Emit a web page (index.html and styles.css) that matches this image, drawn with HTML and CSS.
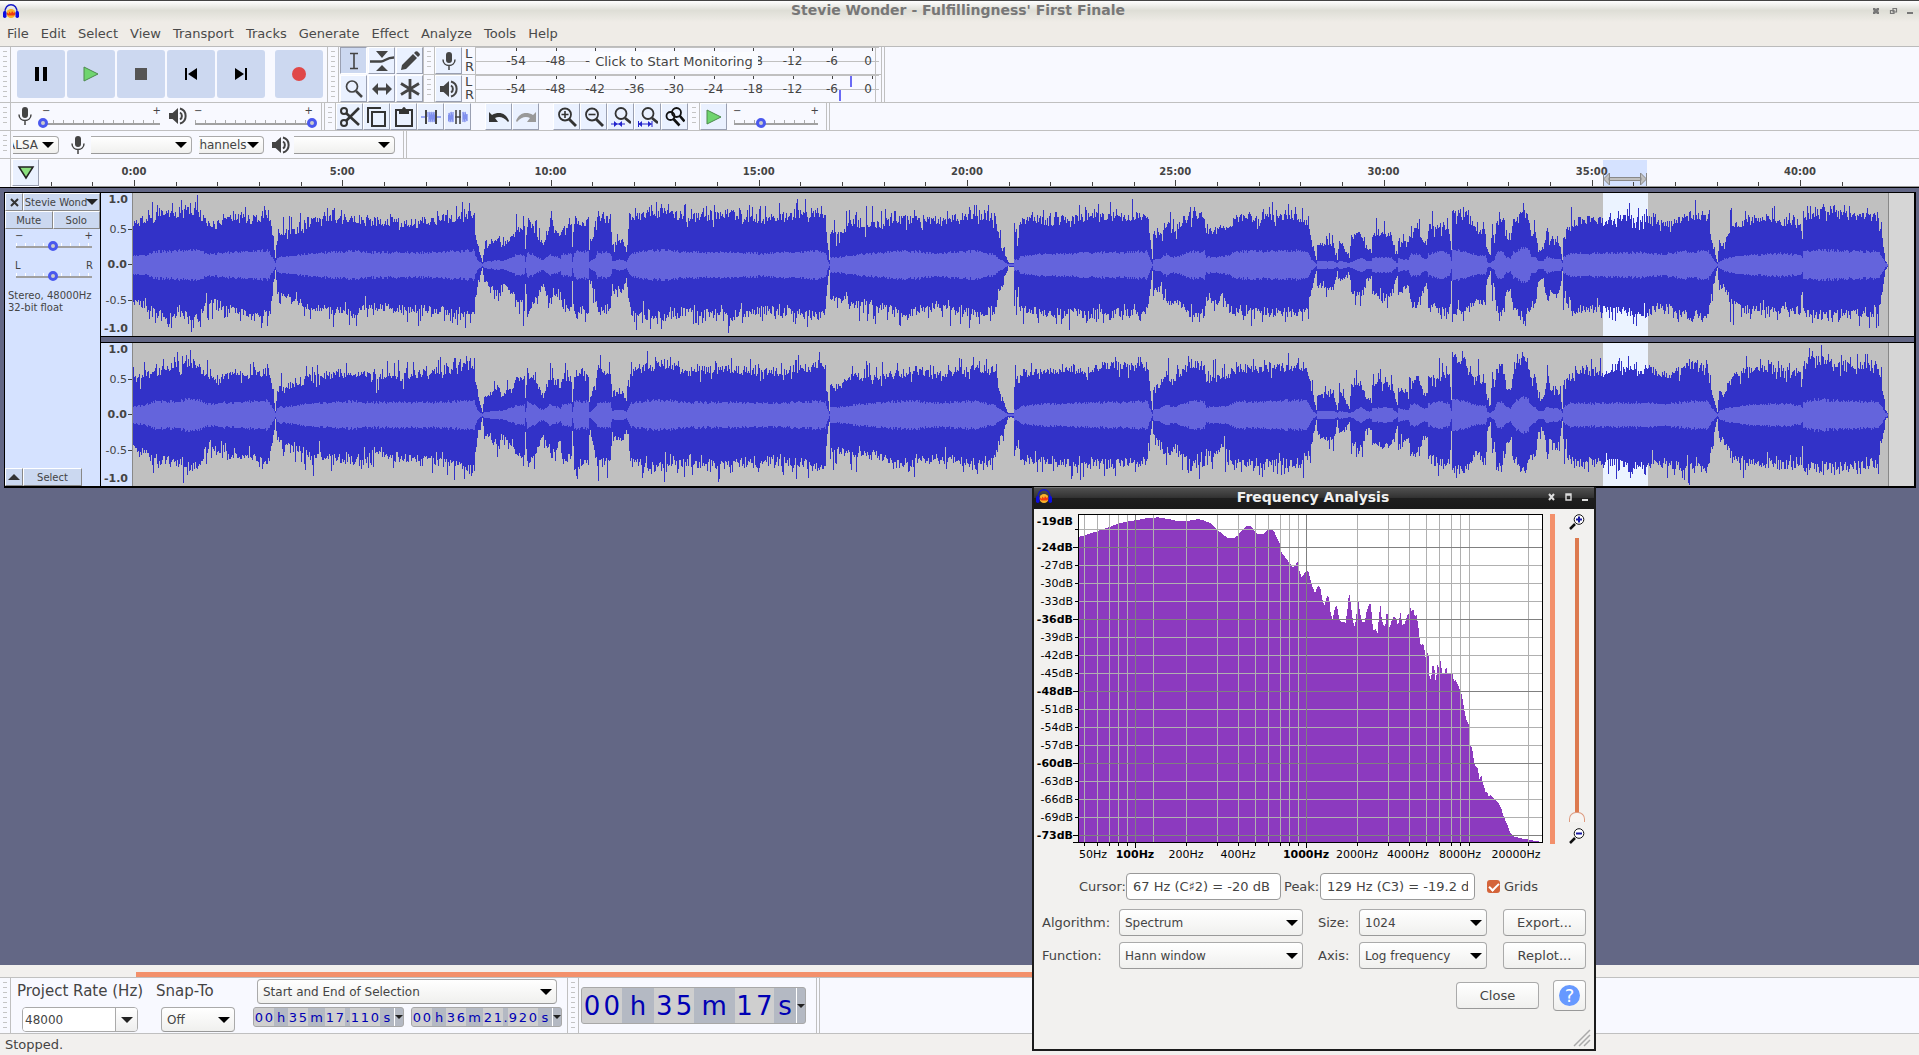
FILE: index.html
```html
<!DOCTYPE html>
<html lang="en">
<head>
    <meta charset="UTF-8">
    <meta name="viewport" content="width=device-width, initial-scale=1.0">
    <title>Stevie Wonder - Fulfillingness' First Finale</title>
    <link rel="stylesheet" href="styles.css">
</head>
<body>

    <svg class="sprite" aria-hidden="true">
        <symbol id="i-logo" viewBox="0 0 16 16">
            <path d="M2 9C1 -2 15 -2 14 9" fill="none" stroke="#1418c8" stroke-width="1.4"/>
            <circle cx="8" cy="9.500" r="4.500" fill="#f9b32a"/>
            <path d="M3.500 10l1-1.500 1 1.500 1-2.500 1.500 2 1-2.500 1.500 2 1-1 1 2-1.500 1.500h-5.500z" fill="#f03a10"/>
            <rect x="0" y="7" width="3.500" height="7" rx="1.700" fill="#0c0ce0"/>
            <rect x="12.500" y="7" width="3.500" height="7" rx="1.700" fill="#0c0ce0"/>
        </symbol>
        <symbol id="i-mic" viewBox="0 0 20 20">
            <rect x="7" y="1" width="6" height="11" rx="3" fill="#444"/>
            <path d="M4 8.500c0 8 12 8 12 0M10 14.500v4.500" fill="none" stroke="#444" stroke-width="1.500"/>
        </symbol>
        <symbol id="i-speaker" viewBox="0 0 20 20">
            <path d="M1 7h3.500L10 2v16l-5.500-5H1z" fill="#444"/>
            <path d="M12 6.500c2.500 1.500 2.500 5.500 0 7M12 2.500c7.500 2 7.500 13 0 15" fill="none" stroke="#444" stroke-width="2"/>
        </symbol>
        <symbol id="i-play" viewBox="0 0 16 16">
            <path d="M1 1l14 7-14 7z" fill="#6fd56f" stroke="#4d8a4d"/>
        </symbol>
    </svg>

    <header class="titlebar">
        <svg class="logo"><use href="#i-logo"/></svg>
        <h1>Stevie Wonder - Fulfillingness' First Finale</h1>
        <div class="window-buttons">
            <svg viewBox="0 0 40 8"><path d="M0 0h2l1 1 1-1h2v2l-1 1 1 1v2H4L3 5 2 6H0V4l1-1-1-1z" fill="#777"/><path d="M20 .500h3.500v3.500h-3.500zM17.500 2.500h3.500v3h-3.500z" fill="none" stroke="#777" stroke-width="1.200"/><path d="M34 4h6v2h-6z" fill="#777"/></svg>
        </div>
    </header>

    <nav class="menu">
        <a href="#">File</a>
        <a href="#">Edit</a>
        <a href="#">Select</a>
        <a href="#">View</a>
        <a href="#">Transport</a>
        <a href="#">Tracks</a>
        <a href="#">Generate</a>
        <a href="#">Effect</a>
        <a href="#">Analyze</a>
        <a href="#">Tools</a>
        <a href="#">Help</a>
    </nav>

    <div class="toolbar toolbar-main">
        <span class="grip"></span>
        <div class="transport">
            <button aria-label="Pause"><svg viewBox="0 0 16 16"><path d="M2 1h4v14H2zM10 1h4v14h-4z"/></svg></button>
            <button aria-label="Play"><svg><use href="#i-play"/></svg></button>
            <button aria-label="Stop"><svg viewBox="0 0 16 16"><path d="M2 2h12v12H2z" fill="#555"/></svg></button>
            <button aria-label="Skip to start"><svg viewBox="0 0 16 16"><path d="M2 2h2v12H2zM14 2v12L5 8z"/></svg></button>
            <button aria-label="Skip to end"><svg viewBox="0 0 16 16"><path d="M12 2h2v12h-2zM2 2v12l9-6z"/></svg></button>
            <button class="record" aria-label="Record"><svg viewBox="0 0 16 16"><circle cx="8" cy="8" r="7" fill="#e04848"/></svg></button>
        </div>
        <span class="grip"></span>
        <div class="tools">
            <button class="cell active" aria-label="Selection tool"><svg viewBox="0 0 20 20"><path d="M6 2.500h8M6 17.500h8M10 2.500v15" fill="none" stroke="#444" stroke-width="1.600"/></svg></button>
            <button class="cell" aria-label="Envelope tool"><svg class="envelope" viewBox="0 0 24 20"><path d="M6 0h12l-6 7zM6 20h12l-6-6z" fill="#444"/><path d="M0 10.500h11c4 0 5-4 13-4" fill="none" stroke="#444" stroke-width="2.400"/></svg></button>
            <button class="cell" aria-label="Draw tool"><svg viewBox="0 0 20 20"><path d="M1 19l1-5L13 3l4 4L6 18zM14 2l1.500-1.500q1-.5 2 0l2 2q.8 1 0 2L18 6z" fill="#444"/></svg></button>
            <button class="cell" aria-label="Zoom tool"><svg viewBox="0 0 20 20"><circle cx="8" cy="7.500" r="5.500" fill="none" stroke="#444" stroke-width="1.700"/><path d="M12 12l6 6" stroke="#444" stroke-width="2.500"/></svg></button>
            <button class="cell" aria-label="Time shift tool"><svg viewBox="0 0 20 20"><path d="M0 10l6-6v4.500h8V4l6 6-6 6v-4.500H6V16z" fill="#444"/></svg></button>
            <button class="cell" aria-label="Multi tool"><svg viewBox="0 0 20 20"><path d="M10 0v20M1 4.500l18 11M19 4.500l-18 11" stroke="#444" stroke-width="2.800"/></svg></button>
        </div>
        <div class="meters">
            <div class="meter-row">
                <span class="grip"></span>
                <button class="cell" aria-label="Recording meter"><svg><use href="#i-mic"/></svg></button>
                <div class="lr"><span>L</span><span>R</span></div>
                <div class="meter">
                    <svg class="meter-scale" viewBox="0 0 404 27"></svg>
                    <button class="monitor">Click to Start Monitoring</button>
                </div>
            </div>
            <div class="meter-row">
                <span class="grip"></span>
                <button class="cell" aria-label="Playback meter"><svg><use href="#i-speaker"/></svg></button>
                <div class="lr"><span>L</span><span>R</span></div>
                <div class="meter">
                    <svg class="meter-scale peaks" viewBox="0 0 404 27"></svg>
                </div>
            </div>
        </div>
        <span class="bar-end"></span>
    </div>

    <div class="toolbar">
        <span class="grip"></span>
        <div class="mixer">
            <svg class="icon"><use href="#i-mic"/></svg>
            <div class="slider mixer-slider">
                <div class="signs"><span>−</span><span>+</span></div>
                <input type="range" min="0" max="100" value="0" aria-label="Recording volume">
            </div>
            <svg class="icon"><use href="#i-speaker"/></svg>
            <div class="slider mixer-slider">
                <div class="signs"><span>−</span><span>+</span></div>
                <input type="range" min="0" max="100" value="100" aria-label="Playback volume">
            </div>
        </div>
        <span class="bar-end"></span>
        <span class="grip"></span>
        <div class="cells">
            <button class="cell" aria-label="Cut"><svg viewBox="0 0 20 20"><circle cx="4" cy="4" r="3" fill="none" stroke="#333" stroke-width="2"/><circle cx="4" cy="16" r="3" fill="none" stroke="#333" stroke-width="2"/><path d="M6 6l13 12M6 14L19 1" stroke="#333" stroke-width="2.600"/></svg></button>
            <button class="cell" aria-label="Copy"><svg viewBox="0 0 20 20"><path d="M1 16V1h13M5 5h13v14H5z" fill="none" stroke="#333" stroke-width="2"/></svg></button>
            <button class="cell" aria-label="Paste"><svg viewBox="0 0 20 20"><path d="M2 3h16v16H2z" fill="none" stroke="#333" stroke-width="2"/><path d="M5 2h3q2-4 4 0h3v5H5z" fill="#333"/></svg></button>
            <button class="cell" aria-label="Trim"><svg viewBox="0 0 20 20"><path d="M0 10h4M16 10h4M6 10V5M8 15V5l2 10V5l2 10V5l2 10V5" fill="none" stroke="#8090ee" stroke-width="1.300"/><path d="M5 3v14M15 3v14" stroke="#444" stroke-width="2"/></svg></button>
            <button class="cell" aria-label="Silence"><svg viewBox="0 0 20 20"><path d="M0 8v5l1 1V6l2 9V5l2 10V5M15 15V5l2 10V5l2 9V7" fill="none" stroke="#8090ee" stroke-width="1.300"/><path d="M8 3v14M12 3v14M7 10h6" stroke="#444" stroke-width="1.600"/></svg></button>
        </div>
        <div class="cells gap">
            <button class="cell" aria-label="Undo"><svg viewBox="0 0 20 20"><path d="M0 5v10h9L6 11c4-2 9-1 13 4l1-1C17 6 10 4 3 8z" fill="#333"/></svg></button>
            <button class="cell" aria-label="Redo"><svg viewBox="0 0 20 20"><path d="M20 5v10h-9l3-4c-4-2-9-1-13 4l-1-1C3 6 10 4 17 8z" fill="#999"/></svg></button>
        </div>
        <div class="cells gap">
            <button class="cell" aria-label="Zoom in"><svg viewBox="0 0 20 20"><circle cx="8" cy="7.500" r="6" fill="none" stroke="#333" stroke-width="1.800"/><path d="M12 12l7 7" stroke="#333" stroke-width="2.800"/><path d="M4.500 7.500h7M8 4v7" stroke="#333" stroke-width="1.600"/></svg></button>
            <button class="cell" aria-label="Zoom out"><svg viewBox="0 0 20 20"><circle cx="8" cy="7.500" r="6" fill="none" stroke="#333" stroke-width="1.800"/><path d="M12 12l7 7" stroke="#333" stroke-width="2.800"/><path d="M4.500 7.500h7" stroke="#333" stroke-width="1.600"/></svg></button>
            <button class="cell" aria-label="Fit selection"><svg viewBox="0 0 20 20"><circle cx="10" cy="6.500" r="5.500" fill="none" stroke="#333" stroke-width="1.800"/><path d="M14 11l6 5" stroke="#333" stroke-width="2.800"/><path d="M0 17h14" stroke="#22c"/><path d="M3 14l3.500 3L3 20zM11 14l-3.500 3 3.500 3z" fill="#22c"/></svg></button>
            <button class="cell" aria-label="Fit project"><svg viewBox="0 0 20 20"><circle cx="10" cy="6.500" r="5.500" fill="none" stroke="#333" stroke-width="1.800"/><path d="M14 11l6 5" stroke="#333" stroke-width="2.800"/><path d="M0 17h14M.500 14v6M14 14v6" stroke="#22c"/><path d="M4 14l-3.500 3L4 20zM10 14l3.500 3-3.500 3z" fill="#22c"/></svg></button>
            <button class="cell" aria-label="Zoom toggle"><svg viewBox="0 0 20 20"><circle cx="5.500" cy="9" r="4" fill="none" stroke="#111" stroke-width="1.800"/><circle cx="11.500" cy="5.500" r="4.500" fill="none" stroke="#111" stroke-width="1.800"/><path d="M8.500 12l6 6.500M14.500 8.500l5 6" stroke="#111" stroke-width="2.600"/></svg></button>
        </div>
        <span class="grip"></span>
        <div class="cells">
            <button class="cell" aria-label="Play at speed"><svg><use href="#i-play"/></svg></button>
            <div class="slider speed-slider">
                <div class="signs"><span>−</span><span>+</span></div>
                <input type="range" min="0" max="100" value="32" aria-label="Playback speed">
            </div>
        </div>
        <span class="bar-end"></span>
    </div>

    <div class="toolbar">
        <span class="grip"></span>
        <div class="device">
            <span class="select clipped host"><select aria-label="Audio host"><option>ALSA</option></select></span>
            <svg class="icon"><use href="#i-mic"/></svg>
            <span class="select clipped wide"><select aria-label="Recording device"><option></option></select></span>
            <span class="select clipped channels"><select aria-label="Recording channels"><option>Channels</option></select></span>
            <svg class="icon"><use href="#i-speaker"/></svg>
            <span class="select clipped wide"><select aria-label="Playback device"><option></option></select></span>
        </div>
        <span class="bar-end"></span>
    </div>

    <div class="timeline">
        <span class="timeline-left"></span>
        <button class="cell" aria-label="Pin play head"><svg viewBox="0 0 20 20"><path d="M3 4h14L10 15z" fill="#8be07e" stroke="#222" stroke-width="1.500"/></svg></button>
        <svg class="timeline-scale" height="27"></svg>
    </div>

    <main>
        <section class="track">
            <div class="panel">
                <div class="panel-row">
                    <button class="panel-close" aria-label="Close track"><svg viewBox="0 0 9 9"><path d="M1 1l7 7M8 1L1 8" stroke="#333" stroke-width="2"/></svg></button>
                    <button class="panel-name">Stevie Wond<span class="down"></span></button>
                </div>
                <div class="panel-row">
                    <button>Mute</button>
                    <button>Solo</button>
                </div>
                <div class="slider">
                    <div class="signs"><span>−</span><span>+</span></div>
                    <input type="range" min="0" max="100" value="49" aria-label="Gain">
                </div>
                <div class="slider pan">
                    <div class="signs"><span>L</span><span>R</span></div>
                    <input type="range" min="0" max="100" value="49" aria-label="Pan">
                </div>
                <p>Stereo, 48000Hz<br>32-bit float</p>
                <div class="panel-row panel-bottom">
                    <button class="panel-close" aria-label="Collapse"><svg class="up" viewBox="0 0 12 6"><path d="M0 6l6-6 6 6z" fill="#333"/></svg></button>
                    <button class="panel-select">Select</button>
                </div>
            </div>
            <div class="channels-view">
                <div class="channel">
                    <ul class="scale"><li>1.0</li><li>0.5</li><li>0.0</li><li>-0.5</li><li>-1.0</li></ul>
                    <svg class="wave" viewBox="0 0 1781 143" preserveAspectRatio="none"></svg>
                </div>
                <div class="channel">
                    <ul class="scale"><li>1.0</li><li>0.5</li><li>0.0</li><li>-0.5</li><li>-1.0</li></ul>
                    <svg class="wave" viewBox="0 0 1781 143" preserveAspectRatio="none"></svg>
                </div>
            </div>
        </section>
    </main>

    <div class="scrollbar"><span></span></div>

    <div class="toolbar toolbar-selection">
        <span class="grip"></span>
        <div class="field rate">
            <label for="rate">Project Rate (Hz)</label>
            <span class="combo"><input id="rate" type="text" value="48000"><button aria-label="Rates"><span class="down"></span></button></span>
        </div>
        <div class="field snap">
            <label for="snap">Snap-To</label>
            <span class="select"><select id="snap"><option>Off</option></select></span>
        </div>
        <div class="field range">
            <span class="select"><select aria-label="Selection mode"><option>Start and End of Selection</option></select></span>
            <div class="times">
                <div class="time"><b>0</b><b>0</b><i>h</i><b>3</b><b>5</b><i class="m">m</i><b>1</b><b>7</b><i class="dot">.</i><b>1</b><b>1</b><b>0</b><i>s</i><button aria-label="Format"><span class="down"></span></button></div>
                <div class="time"><b>0</b><b>0</b><i>h</i><b>3</b><b>6</b><i class="m">m</i><b>2</b><b>1</b><i class="dot">.</i><b>9</b><b>2</b><b>0</b><i>s</i><button aria-label="Format"><span class="down"></span></button></div>
            </div>
        </div>
        <span class="grip"></span>
        <div class="time big"><b>0</b><b>0</b><i>h</i><b>3</b><b>5</b><i class="m">m</i><b>1</b><b>7</b><i class="s">s</i><button aria-label="Format"><span class="down"></span></button></div>
        <span class="bar-end"></span>
    </div>

    <footer>Stopped.</footer>

    <div class="dialog" role="dialog" aria-labelledby="dialog-title">
        <div class="dialog-title">
            <svg class="logo"><use href="#i-logo"/></svg>
            <h2 id="dialog-title">Frequency Analysis</h2>
            <svg class="dialog-buttons" viewBox="0 0 42 8"><path d="M1 1l5 6M6 1L1 7" stroke="#ddd" stroke-width="2"/><path d="M18 1h5v6h-5zM18 2h5" fill="none" stroke="#ddd" stroke-width="1.400"/><path d="M34 6h6v2h-6z" fill="#ddd"/></svg>
        </div>
        <div class="plot-row">
            <svg class="plot" viewBox="0 0 512 350"></svg>
            <span class="plot-scroll"></span>
            <div class="plot-zoom">
                <svg viewBox="0 0 16 16"><path d="M1 15l5-5" stroke="#111" stroke-width="2.500"/><circle cx="10" cy="5.500" r="4.800" fill="#fff" stroke="#111"/><path d="M7 5.500h6M10 2.500v6" stroke="#1818a0" stroke-width="2"/></svg>
                <input type="range" min="0" max="100" value="0" aria-label="Vertical zoom">
                <svg viewBox="0 0 16 16"><path d="M1 15l5-5" stroke="#111" stroke-width="2.500"/><circle cx="10" cy="5.500" r="4.800" fill="#fff" stroke="#111"/><path d="M7 5.500h6" stroke="#1818a0" stroke-width="2"/></svg>
            </div>
        </div>
        <div class="readout">
            <label for="cursor">Cursor:</label><input id="cursor" type="text" value="67 Hz (C♯2) = -20 dB" readonly>
            <label for="peak">Peak:</label><input id="peak" type="text" value="129 Hz (C3) = -19.2 dB" readonly>
            <label class="grids"><input type="checkbox" checked>Grids</label>
        </div>
        <div class="options">
            <label for="algorithm">Algorithm:</label>
            <span class="select"><select id="algorithm"><option>Spectrum</option></select></span>
            <label for="size">Size:</label>
            <span class="select"><select id="size"><option>1024</option></select></span>
            <button>Export...</button>
            <label for="function">Function:</label>
            <span class="select"><select id="function"><option>Hann window</option></select></span>
            <label for="axis">Axis:</label>
            <span class="select"><select id="axis"><option>Log frequency</option></select></span>
            <button>Replot...</button>
        </div>
        <div class="dialog-footer">
            <button class="close">Close</button>
            <button class="help" aria-label="Help"><span>?</span></button>
        </div>
        <svg class="resize" viewBox="0 0 18 18"><path d="M1 17L17 1M6 17L17 6M11 17l6-6" stroke="#aaa" stroke-width="1.500"/></svg>
    </div>

    <script src="app.js"></script>
</body>
</html>
```
FILE: styles.css
```css
* {
    box-sizing: border-box;
}
body {
    margin: 0;
    min-height: 100vh;
    display: flex;
    flex-direction: column;
    position: relative;
    font-family: "DejaVu Sans", sans-serif;
    font-size: 13px;
    color: #444;
    background-color: #636785;
    overflow: hidden;
}
button, input, select {
    font-family: inherit;
    font-size: 13px;
    color: #444;
    margin: 0;
    padding: 0;
}
svg {
    display: block;
}
.sprite {
    display: none;
}
.logo {
    width: 16px;
    height: 16px;
}

/* title and menu */
.titlebar {
    height: 22px;
    padding: 0 6px 0 3px;
    display: flex;
    align-items: center;
    justify-content: space-between;
    border-top: 1px solid #444;
    background: linear-gradient(#fff, #deded6 45%, #efece7);
}
.titlebar h1 {
    margin: 0 0 3px;
    font-size: 14px;
    line-height: 18px;
    color: #777;
}
.window-buttons svg {
    width: 40px;
    height: 8px;
}
.titlebar .logo {
    margin-right: 24px;
}
.menu {
    height: 25px;
    padding: 0 0 1px 7px;
    display: flex;
    gap: 12px;
    align-items: center;
    background-color: #efece7;
    border-bottom: 1px solid #bbb;
}
.menu a {
    color: #4a4a4a;
    text-decoration: none;
}

/* toolbars */
.toolbar {
    height: 28px;
    display: flex;
    background-color: #f8f9ff;
    border-bottom: 1px solid #c0c0c0;
}
.toolbar-main {
    height: 56px;
}
.grip {
    width: 11px;
    flex: none;
    border-right: 1px solid #c0c0c0;
    padding: 4px 3px;
    background: repeating-linear-gradient(#c4c4c4 0 1px, #f8f9ff 1px 5px) content-box;
}
.bar-end {
    width: 4px;
    flex: none;
    border-left: 1px solid #c0c0c0;
    border-right: 1px solid #c0c0c0;
}
.cell {
    width: 27px;
    height: 27px;
    flex: none;
    display: flex;
    align-items: center;
    justify-content: center;
    background-color: #eaf1ff;
    border: 1px solid #fff;
    border-right-color: #9aa0b2;
    border-bottom-color: #9aa0b2;
}
.cell svg {
    width: 20px;
    height: 20px;
}
.cell .envelope {
    width: 24px;
}
.cell svg:has(use[href="#i-play"]) {
    width: 16px;
    height: 16px;
}
.cell.active {
    background-color: #ccd8f0;
    border-color: #9aa0b2 #fff #fff #9aa0b2;
}
.transport {
    display: flex;
    gap: 2px;
    padding: 3px 4px 0 6px;
    border-right: 1px solid #c0c0c0;
}
.transport button {
    width: 48px;
    height: 48px;
    display: flex;
    align-items: center;
    justify-content: center;
    border: none;
    border-radius: 3px;
    background-color: #ccd8f0;
}
.transport svg {
    width: 16px;
    height: 16px;
}
.transport .record {
    margin-left: 8px;
}
.tools {
    display: grid;
    grid-template-columns: repeat(3, 27px);
    gap: 1px;
    padding-left: 1px;
    align-content: start;
    border-right: 1px solid #c0c0c0;
}
.meters {
    display: flex;
    flex-direction: column;
    gap: 1px;
    background-color: #c0c0c0;
}
.meter-row {
    display: flex;
    height: 27px;
    background-color: #f8f9ff;
}
.lr {
    width: 13px;
    padding-left: 3px;
    display: flex;
    flex-direction: column;
    line-height: 13px;
}
.meter {
    position: relative;
    width: 406px;
}
.meter-scale {
    width: 404px;
    height: 27px;
    font-size: 12px;
}
.monitor {
    position: absolute;
    left: 115px;
    top: 5px;
    width: 168px;
    height: 19px;
    border: none;
    background-color: #fbfcff;
    white-space: nowrap;
}
.mixer {
    display: flex;
    padding-right: 4px;
}
.icon {
    width: 20px;
    height: 20px;
    flex: none;
    margin: 3px 3px 0 4px;
}
.slider + .icon {
    margin: 3px 2px 0 3px;
}
.cells {
    display: flex;
}
.cells.gap {
    margin-left: 14px;
}
.cells + .grip {
    margin-left: 1px;
}

/* sliders */
.slider {
    font-size: 10px;
    line-height: 10px;
}
.signs {
    display: flex;
    justify-content: space-between;
    padding: 0 4px;
}
.slider input {
    display: block;
    width: 100%;
    height: 10px;
    appearance: none;
    background:
        linear-gradient(#a0a0a0, #a0a0a0) 5px 5px / calc(100% - 10px) 2px no-repeat,
        repeating-linear-gradient(90deg, #aaa 0 1px, transparent 1px 10px) 5px 2px / calc(100% - 10px) 3px no-repeat;
}
.slider input::-webkit-slider-thumb {
    appearance: none;
    width: 10px;
    height: 10px;
    border: 3px solid #4a58ee;
    border-radius: 50%;
    background-color: #ccc;
}
.mixer-slider {
    width: 127px;
    padding-top: 3px;
}
.mixer-slider input,
.speed-slider input {
    margin-top: 2px;
}
.speed-slider {
    width: 94px;
    margin: 0 3px 0 2px;
    padding-top: 3px;
}

/* drop-downs */
.select {
    position: relative;
    display: block;
    overflow: hidden;
}
.select select {
    appearance: none;
    width: 100%;
    height: 100%;
    padding-left: 5px;
    font-size: 12px;
    border: 1px solid #aaa;
    border-bottom-color: #999;
    border-radius: 4px;
    background: linear-gradient(#fff, #f0f0ee);
}
.select::after {
    content: "";
    position: absolute;
    right: 5px;
    top: calc(50% - 3px);
    border: 6px solid transparent;
    border-top-color: #000;
    border-bottom: none;
    pointer-events: none;
}
.device {
    display: flex;
    padding: 5px 8px 0 2px;
}
.device .select {
    height: 18px;
    display: flex;
    justify-content: flex-end;
}
.device .clipped select {
    width: calc(100% + 12px);
    flex: none;
}
.device .icon {
    margin: -1px 3px 0 9px;
}
.device .host {
    width: 46px;
}
.device .wide {
    width: 101px;
}
.device .channels {
    width: 65px;
    margin-left: 7px;
}
.device .channels + .icon {
    margin-left: 7px;
}
.device .channels select {
    padding-left: 3px;
}

/* time ruler */
.timeline {
    height: 29px;
    display: flex;
    background-color: #f8f9ff;
    border-bottom: 1px solid #000;
}
.timeline-left {
    width: 11px;
    margin-right: 1px;
    border-right: 1px solid #c0c0c0;
}
.timeline-scale {
    flex: 1;
    height: 28px;
    border-bottom: 1px solid #999;
    font-size: 10px;
    font-weight: bold;
}

/* track */
main {
    flex: 1;
    padding: 4px 3px 0 4px;
}
.track {
    display: flex;
    height: 296px;
    border: 1px solid #000;
    border-right-width: 2px;
    border-bottom-width: 2px;
}
.panel {
    width: 96px;
    flex: none;
    display: flex;
    flex-direction: column;
    background-color: #d5e2ff;
    border-right: 1px solid #000;
    font-size: 10px;
}
.panel-row {
    display: flex;
    height: 18px;
}
.panel button {
    flex: 1;
    display: flex;
    align-items: center;
    justify-content: center;
    gap: 1px;
    font-size: 10px;
    background-color: #cbd8f0;
    border: 1px solid #fff;
    border-right-color: #888;
    border-bottom-color: #888;
    white-space: nowrap;
}
.panel .panel-close {
    flex: none;
    width: 18px;
}
.panel-close svg {
    width: 9px;
}
.panel-close .up {
    width: 12px;
}
.panel-name .down {
    margin-left: -2px;
}
.down {
    border: 6px solid transparent;
    border-top-color: #222;
    border-bottom: none;
}
.panel .slider {
    width: 86px;
    margin: 0 0 0 6px;
    padding-top: 2px;
}
.panel .slider input {
    background:
        linear-gradient(#a0a0a0, #a0a0a0) 5px 5px / calc(100% - 10px) 2px no-repeat,
        repeating-linear-gradient(90deg, #fff 0 1px, transparent 1px 9px) 5px 2px / calc(100% - 10px) 3px no-repeat;
}
.panel .slider.pan {
    margin-top: 8px;
}
.panel p {
    margin: 9px 0 0 3px;
    line-height: 12px;
    white-space: nowrap;
}
.panel-bottom {
    margin-top: auto;
}
.panel .panel-select {
    flex: none;
    width: 59px;
}
.channels-view {
    flex: 1;
    display: flex;
    flex-direction: column;
    gap: 5px;
}
.channel {
    flex: 1;
    display: flex;
    border-bottom: 1px solid #000;
}
.channel + .channel {
    border-top: 1px solid #000;
    border-bottom: none;
}
.scale {
    width: 32px;
    margin: 0;
    padding: 0 4px 0 0;
    display: grid;
    grid-template-rows: 30px 35px 36px 28px 13px;
    list-style: none;
    text-align: right;
    font-size: 11px;
    line-height: 13px;
    background-color: #d5e2ff;
    border-right: 1px solid #888;
}
.scale li {
    height: 13px;
}
.scale li:nth-child(odd) {
    font-weight: bold;
}
.scale li:nth-child(2),
.scale li:nth-child(3),
.scale li:nth-child(4) {
    margin-right: -4px;
    background: linear-gradient(#444, #444) right center / 4px 1px no-repeat;
    padding-right: 5px;
}
.wave {
    flex: 1;
    min-width: 0;
    height: 143px;
    background-color: #d6d6d6;
}

/* bottom */
.scrollbar {
    height: 13px;
    padding: 7px 0 1px 136px;
    background-color: #f2f0ee;
    border-bottom: 1px solid #c0c0c0;
}
.scrollbar span {
    display: block;
    width: 65%;
    height: 5px;
    background-color: #f3906b;
}
.toolbar-selection {
    height: 56px;
}
.field {
    display: flex;
    flex-direction: column;
    justify-content: space-between;
    padding: 1px 0;
}
.field label {
    font-size: 15px;
    line-height: 25px;
}
.rate {
    width: 139px;
    padding-left: 6px;
}
.combo {
    display: flex;
    width: 116px;
    height: 25px;
    margin-left: 5px;
    border: 1px solid #aaa;
    border-radius: 4px;
    overflow: hidden;
}
.combo input {
    width: 92px;
    padding-left: 2px;
    border: none;
    font-size: 12px;
}
.combo button {
    flex: 1;
    display: flex;
    align-items: center;
    justify-content: center;
    border: none;
    border-left: 1px solid #aaa;
    background: linear-gradient(#fff, #eee);
}
.snap {
    width: 97px;
    padding-left: 6px;
}
.field .select {
    width: 74px;
    height: 25px;
}
.snap .select {
    margin-left: 5px;
}
.range {
    width: 321px;
    padding-left: 6px;
    border-right: 1px solid #c0c0c0;
}
.field.range .select {
    width: 300px;
    margin-left: 4px;
}
.times {
    display: flex;
    gap: 7px;
    padding-bottom: 5px;
}
.time {
    display: flex;
    height: 20px;
    border: 1px solid #a8a8a8;
    border-radius: 3px;
    overflow: hidden;
    line-height: 20px;
    text-align: center;
    color: #0000b4;
    background-color: #b4b9c3;
}
.time b, .time i {
    width: 10px;
    font-weight: normal;
    font-style: normal;
    background-color: #cfcfcf;
}
.time i {
    width: 14px;
    background-color: #b4b9c3;
}
.time .m {
    width: 17px;
}
.time .dot {
    width: 5px;
}
.time button {
    flex: 1;
    width: 9px;
    display: flex;
    align-items: center;
    justify-content: center;
    border: none;
    border-left: 1px solid #fff;
    background: none;
}
.time .down {
    border-width: 4px;
    border-bottom-width: 0;
}
.time.big {
    width: 225px;
    height: 37px;
    margin: 9px 10px 0 2px;
    font-size: 26px;
    line-height: 36px;
}
.big b {
    width: 20px;
}
.big i {
    width: 33px;
}
.big .m {
    width: 41px;
}
.big .s {
    width: 22px;
}
footer {
    height: 21px;
    padding-left: 5px;
    line-height: 22px;
    background-color: #f2f0ee;
}

/* frequency analysis window */
.dialog {
    position: absolute;
    left: 1032px;
    top: 487px;
    width: 564px;
    height: 564px;
    display: flex;
    flex-direction: column;
    border: 2px solid #1c1c1c;
    border-top: none;
    background-color: #f2f1ef;
}
.dialog-title {
    height: 22px;
    padding: 0 4px 3px 2px;
    display: flex;
    align-items: center;
    justify-content: space-between;
    border-top: 1px solid #777;
    background: linear-gradient(#505050, #333 45%, #1e1e1e 50%, #1a1a1a);
}
.dialog-title h2 {
    margin: 0;
    padding-left: 26px;
    font-size: 14px;
    line-height: 18px;
    color: #f0f0f0;
}
.dialog-buttons {
    width: 42px;
    height: 8px;
}
.plot-row {
    display: flex;
    height: 350px;
    margin-top: 3px;
}
.plot {
    width: 512px;
    height: 350px;
    flex: none;
    font-size: 11px;
}
.plot-scroll {
    width: 5px;
    height: 330px;
    margin: 2px 0 0 4px;
    background-color: #f3906b;
}
.plot-zoom {
    width: 16px;
    height: 330px;
    margin: 2px 0 0 14px;
    display: flex;
    flex-direction: column;
    justify-content: space-between;
    align-items: center;
}
.plot-zoom svg {
    width: 16px;
    height: 16px;
    flex: none;
}
.plot-zoom input {
    appearance: none;
    writing-mode: vertical-lr;
    direction: rtl;
    width: 16px;
    height: 284px;
    margin-top: 2px;
    background: linear-gradient(#dd7a4f, #dd7a4f) center / 4px 100% no-repeat;
}
.plot-zoom input::-webkit-slider-thumb {
    appearance: none;
    width: 16px;
    height: 10px;
    border: 1px solid #dd9a7f;
    border-bottom: none;
    border-radius: 7px 7px 0 0;
    background-color: #f6f4f2;
}
.readout {
    display: flex;
    align-items: center;
    height: 27px;
    margin-top: 11px;
    padding-left: 45px;
}
.readout input[type="text"] {
    width: 155px;
    height: 27px;
    padding: 0 6px;
    margin: 0 3px 0 0;
    border: 1px solid #999;
    border-radius: 4px;
    background-color: #fff;
}
.readout label {
    width: 47px;
}
.readout label[for="peak"] {
    width: 36px;
}
.readout .grids {
    width: auto;
    display: flex;
    align-items: center;
    gap: 4px;
    margin-left: 9px;
}
.readout input[type="checkbox"] {
    appearance: none;
    width: 13px;
    height: 13px;
    border-radius: 3px;
    background-color: #d4643a;
    display: grid;
    place-items: center;
}
.readout input[type="checkbox"]::before {
    content: "";
    width: 8px;
    height: 4px;
    margin-bottom: 2px;
    border-left: 2px solid #fff;
    border-bottom: 2px solid #fff;
    rotate: -45deg;
}
.options {
    display: grid;
    grid-template-columns: 77px 184px 15px 41px 128px 16px 83px;
    row-gap: 6px;
    grid-auto-rows: 27px;
    align-items: center;
    margin-top: 9px;
    padding-left: 8px;
}
.options .select {
    height: 27px;
}
.options label:nth-of-type(even) {
    grid-column: 4;
}
.options button, .dialog-footer button {
    grid-column: 7;
    height: 27px;
    border: 1px solid #aaa;
    border-bottom-color: #999;
    border-radius: 4px;
    background: linear-gradient(#fff, #f0f0ee);
}
.dialog-footer {
    display: flex;
    align-items: center;
    justify-content: flex-end;
    gap: 14px;
    margin-top: 11px;
    padding-right: 8px;
}
.dialog-footer .close {
    width: 83px;
}
.dialog-footer .help {
    width: 33px;
    height: 31px;
    display: flex;
    align-items: center;
    justify-content: center;
}
.help span {
    width: 21px;
    height: 21px;
    border-radius: 50%;
    background-color: #6699ff;
    color: #fff;
    font-size: 18px;
    line-height: 21px;
}
.resize {
    width: 18px;
    height: 18px;
    margin: auto 3px 2px auto;
}
```
FILE: app.js
```js
const NS = 'http://www.w3.org/2000/svg';

function add(parent, name, attrs, text) {
    const el = document.createElementNS(NS, name);
    for (const key in attrs) el.setAttribute(key, attrs[key]);
    if (text) el.textContent = text;
    parent.appendChild(el);
    return el;
}

function line(parent, x, y, w, h, fill) {
    add(parent, 'rect', { x: Math.round(x), y: Math.round(y), width: w, height: h, fill: fill });
}

// level meters
document.querySelectorAll('.meter-scale').forEach(function(svg) {
    const playback = svg.classList.contains('peaks');
    line(svg, 0, 1, 1, 26, '#c0c0c0');
    line(svg, 0, 14, 404, 1, '#c0c0c0');
    line(svg, 0, 0, 404, 1, '#c0c0c0');
    for (let i = 0; i < 10; i++) {
        const x = 41 + i * 39.5;
        const db = -54 + i * 6;
        line(svg, x, 1, 1, 3, '#444');
        // the monitoring button covers the middle of the recording meter
        if (!playback && db > -42 && db < -18) continue;
        add(svg, 'text', { x: db ? x : 393, y: 18, 'text-anchor': 'middle', fill: '#444' }, String(db));
    }
    line(svg, 400, 1, 1, 26, '#c0c0c0');
    if (playback) {
        line(svg, 375, 1, 2, 11, '#6a6af5');
        line(svg, 364, 15, 2, 11, '#6a6af5');
    }
});

// time ruler, 0:00 sits 95px from the left of the scale
const ruler = document.querySelector('.timeline-scale');
line(ruler, 1564, 1, 44, 26, '#d5e2ff');
for (let i = -2; i <= 41; i++) {
    const x = 95 + i * 41.65;
    const major = i >= 0 && i % 5 === 0;
    line(ruler, x, major ? 21 : 23, 1, major ? 6 : 4, '#444');
    if (major) add(ruler, 'text', { x: x, y: 16, 'text-anchor': 'middle', fill: '#444' }, i + ':00');
}
add(ruler, 'path', {
    d: 'M1570 18.500h32v3h-32zM1564.500 20l6-6v12zM1607.500 20l-6-6v12zM1564.500 14v13M1607.500 14v13',
    fill: '#c0c0c0', stroke: '#888'
});

// waveform: x, height above, height below, rms
const shape = [
    [0,46,38,9],[12,46,44,10],[22,51,52,14],[42,55,50,14],[57,57,57,16],[67,54,54,15],[72,45,42,12],[82,42,39,11],[89,48,44,13],[102,50,49,13],
    [117,48,50,14],[135,54,54,15],[139,35,35,8],[142,5,5,2],[144,28,28,7],[147,34,30,8],[157,36,35,9],[170,38,42,11],[172,48,44,11],
    [197,50,48,13],[217,50,52,14],[237,46,43,13],[267,45,47,13],[300,47,48,13],[341,53,53,15],[342,35,35,10],[345,18,18,4],[349,3,3,1],
    [351,17,17,3],[366,30,30,5],[368,20,18,4],[380,30,30,8],[382,38,38,10],[391,38,42,10],[392,17,17,3],[394,45,50,13],[401,38,40,10],
    [410,20,20,5],[416,42,40,11],[427,30,28,7],[429,42,42,11],[438,40,45,12],[439,16,16,3],[441,46,50,14],[455,46,48,14],[456,15,15,3],
    [462,36,36,8],[464,50,50,13],[477,48,50,13],[479,22,22,4],[489,25,28,6],[493,15,15,3],[495,38,30,7],[498,50,50,12],[516,54,54,15],
    [535,56,55,15],[554,50,50,13],[600,54,54,13],[611,51,49,12],[634,48,48,12],[684,56,54,14],[692,54,50,13],[694,25,20,6],[696,5,5,1],
    [697,35,35,8],[707,33,38,8],[718,45,42,10],[738,42,40,12],[764,48,50,14],[784,50,50,14],[803,46,44,12],[829,52,50,14],[845,54,52,14],
    [862,50,48,10],[866,28,25,6],[869,22,23,5],[872,10,12,2],[875,2,2,1],[880,2,2,1],[881,42,42,6],[885,30,30,6],[887,48,46,9],
    [907,48,50,11],[942,49,51,12],[972,52,53,13],[992,52,50,13],[1014,52,50,14],[1016,38,35,8],[1019,6,6,1],[1020,30,22,5],[1027,33,30,7],
    [1033,45,42,11],[1039,36,38,8],[1045,43,40,9],[1057,52,52,14],[1071,53,52,14],[1073,34,35,8],[1082,38,42,8],[1089,42,32,9],
    [1095,42,46,10],[1103,50,50,14],[1127,50,50,14],[1170,50,50,15],[1175,43,42,13],[1178,28,30,6],[1183,5,5,1],[1184,22,22,4],[1200,22,26,4],
    [1204,6,7,2],[1206,28,20,4],[1216,7,7,2],[1218,30,28,3],[1228,33,33,8],[1233,17,14,4],[1238,17,14,4],[1239,33,30,7],[1257,32,33,8],
    [1264,11,11,2],[1265,27,30,7],[1275,22,22,5],[1277,38,40,11],[1285,38,42,11],[1290,22,23,7],[1294,22,24,7],[1295,40,42,11],
    [1307,42,48,15],[1316,40,48,11],[1318,16,16,4],[1319,54,52,16],[1333,52,50,14],[1342,38,38,10],[1352,35,40,10],[1354,15,15,3],
    [1357,10,7,2],[1359,42,35,4],[1361,25,25,5],[1363,46,45,12],[1368,50,52,15],[1371,45,45,11],[1373,26,27,8],[1377,25,27,7],
    [1380,42,45,13],[1390,57,56,18],[1395,52,50,16],[1398,34,42,9],[1402,38,42,8],[1405,15,18,4],[1410,15,15,4],[1414,42,42,9],[1417,25,25,7],
    [1422,28,32,7],[1427,20,22,6],[1429,5,5,2],[1430,32,35,8],[1437,40,45,12],[1447,48,48,12],[1470,46,46,12],[1507,50,52,13],[1527,45,46,11],
    [1537,43,48,12],[1557,53,53,14],[1575,50,53,14],[1578,25,30,8],[1584,3,3,1],[1586,28,25,4],[1590,18,22,6],[1597,42,40,8],[1612,46,47,10],
    [1632,50,49,11],[1647,47,48,12],[1667,44,48,10],[1669,30,30,8],[1670,52,50,13],[1682,55,53,16],[1717,52,53,14],[1745,50,50,14],
    [1747,40,40,11],[1752,5,5,2],[1755,1,1,1]
];

// lower channel against the upper one: x, gain above, gain below
const same = [[0,1,1],[1755,1,1]];
const lower = [
    [0,.85,.9],[57,1,1],[72,.88,.9],[170,.86,.92],[300,.95,1],[341,1.02,1.12],[500,.93,1],[692,.92,1.02],[860,.92,.98],[1010,1,1],
    [1318,1,1.05],[1319,1.14,1.15],[1350,1,1.1],[1390,1.12,1.05],[1450,.98,1.05],[1640,1,1.1],[1680,1.05,1.05],[1755,1.05,1]
];

function at(table, x) {
    let i = 1;
    while (i < table.length - 1 && table[i][0] < x) i++;
    const a = table[i - 1], b = table[i];
    const t = (x - a[0]) / (b[0] - a[0]);
    return a.map((v, k) => v + (b[k] - v) * t);
}

function drawWave(svg, gains, seed) {
    const mid = 72;
    const rand = function() {
        seed = (seed * 16807) % 2147483647;
        return seed / 2147483647;
    };
    const height = function(v) {
        // quiet passages are the most ragged ones
        const rough = v < 43 ? 1.8 : 1;
        let k = 0.84 + 0.2 * rand();
        if (rand() < 0.22) k += 0.26 * rough * rand();
        if (rand() < 0.12) k -= 0.18 * rough * rand();
        return Math.min(70, Math.max(1, Math.round(v * k)));
    };
    let peaks = '', rms = '';
    for (let x = 0; x < 1755; x++) {
        const s = at(shape, x), g = at(gains, x);
        const up = height(s[1] * g[1]), down = height(s[2] * g[2]);
        const r = Math.max(0, Math.round(s[3] * (0.86 + 0.22 * rand())));
        peaks += 'M' + x + ' ' + (mid - up) + 'h1v' + (up + down) + 'h-1z';
        if (r) rms += 'M' + x + ' ' + (mid - r) + 'h1v' + (2 * r) + 'h-1z';
    }
    line(svg, 0, 0, 1755, 143, '#c0c0c0');
    line(svg, 1470, 0, 45, 143, '#ebf3ff');
    line(svg, 1755, 0, 1, 143, '#888');
    add(svg, 'path', { d: peaks, fill: '#3232c8', 'shape-rendering': 'crispEdges' });
    add(svg, 'path', { d: rms, fill: '#6464dc', 'shape-rendering': 'crispEdges' });
}

const waves = document.querySelectorAll('.wave');
drawWave(waves[0], same, 4711);
drawWave(waves[1], lower, 815);

// spectrum
const spectrum = '135,170 150,166 185,154 215,142 247,130 270,124 290,121 320,115 352,112 385,118 405,123 430,124 450,119 465,118 480,122 ' +
    '500,132 513,147 530,163 543,174 558,175 570,168 585,148 595,139 606,139 613,145 622,160 640,163 650,152 660,145 670,152 686,190 690,215 ' +
    '700,230 712,247 722,262 730,255 735,246 740,270 747,292 753,283 760,270 766,278 775,315 783,340 787,330 792,315 798,325 805,365 810,375 ' +
    '817,346 822,352 826,395 831,420 836,395 841,376 845,385 850,420 855,426 862,425 867,430 872,395 877,336 881,365 887,420 893,442 899,390 ' +
    '903,365 907,400 913,425 920,425 926,390 935,366 939,400 943,452 950,447 955,460 960,400 963,374 967,420 973,440 978,430 981,384 985,430 ' +
    '989,445 994,420 1000,410 1008,418 1011,440 1019,396 1023,435 1030,430 1037,405 1041,400 1044,373 1048,395 1053,386 1058,410 1062,405 ' +
    '1067,435 1072,485 1075,500 1078,488 1080,500 1083,490 1086,535 1090,519 1095,520 1098,590 1102,600 1107,550 1112,570 1115,608 1121,545 ' +
    '1124,575 1129,537 1132,580 1141,582 1143,552 1147,580 1155,580 1160,572 1165,605 1170,600 1178,620 1187,645 1195,700 1200,720 1206,735 ' +
    '1209,790 1215,805 1222,855 1230,865 1236,900 1240,882 1245,910 1253,940 1256,930 1259,948 1267,945 1275,955 1285,965 1295,985 1300,1005 ' +
    '1310,1030 1320,1058 1330,1070 1355,1076 1390,1083 1407,1086 135,1086';

const plot = document.querySelector('.plot');
line(plot, 44, 2, 465, 329, '#000');
line(plot, 45, 3, 463, 327, '#fff');
const area = add(plot, 'svg', { x: 45, y: 3, width: 463, height: 327, viewBox: '135 105 1272 981', preserveAspectRatio: 'none' });
add(area, 'polygon', { points: spectrum, fill: '#8c3abf', 'shape-rendering': 'crispEdges' });

const freqs = [50, 60, 70, 80, 90, 100, 127, 200, 300, 400, 500, 600, 700, 800, 900, 1000, 2000, 3000, 4000, 5000, 6000, 7000, 8000, 9000, 20000];
const major = [100, 1000];
const hertz = { 50: 59, 100: 101, 200: 152, 400: 204, 1000: 272, 2000: 323, 4000: 374, 8000: 426, 20000: 482 };
function vertical(f) {
    const x = 101 + 171 * Math.log10(f / 100);
    const bold = major.includes(f);
    line(plot, x, 3, 1, 327, bold ? '#808080' : '#b0b0b0');
    if (f !== 127) line(plot, x, 331, 1, bold ? 5 : 3, '#000');
}
freqs.filter(f => !major.includes(f)).forEach(vertical);
for (let i = 0; i < 18; i++) {
    const y = 17 + i * 18;
    const bold = i % 4 === 1 || i === 17;
    line(plot, 45, y, 463, 1, bold ? '#808080' : '#b0b0b0');
    line(plot, bold ? 39 : 41, y, bold ? 5 : 3, 1, '#000');
    if (i) {
        const db = i === 17 ? -73 : -21 - i * 3;
        add(plot, 'text', { x: 39, y: y + 4, 'text-anchor': 'end', 'font-weight': bold ? 'bold' : 'normal' }, db + 'dB');
    }
}
add(plot, 'text', { x: 39, y: 13, 'text-anchor': 'end', 'font-weight': 'bold' }, '-19dB');
line(plot, 39, 330, 5, 1, '#000');
major.forEach(vertical);
for (const f in hertz) {
    add(plot, 'text', { x: hertz[f], y: 346, 'text-anchor': 'middle', 'font-weight': major.includes(+f) ? 'bold' : 'normal' }, f + 'Hz');
}
```
